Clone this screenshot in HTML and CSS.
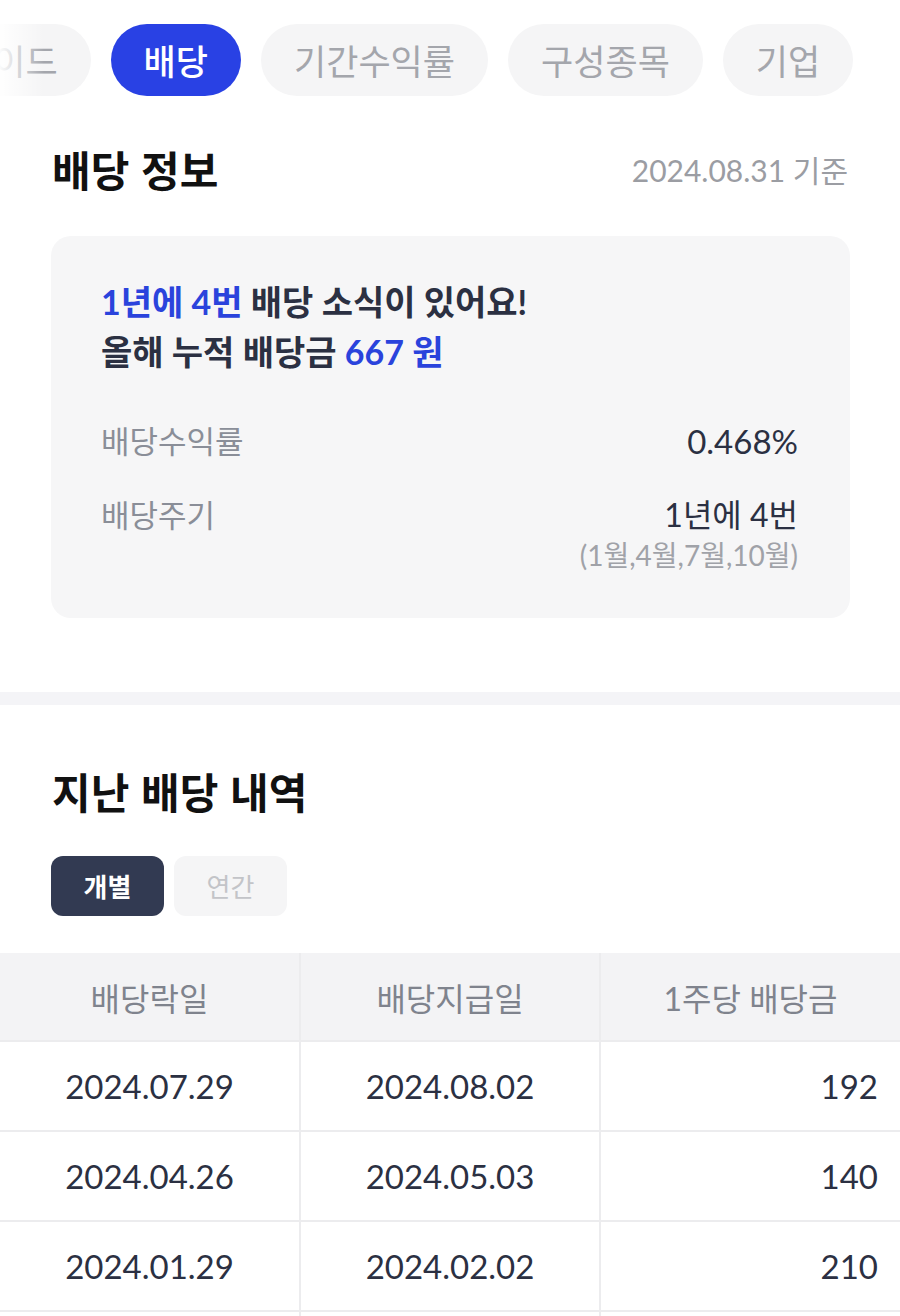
FILE: index.html
```html
<!DOCTYPE html>
<html lang="ko">
<head>
<meta charset="utf-8">
<title>배당</title>
<link rel="stylesheet" href="styles.css">
</head>
<body>
<div class="page">
  <nav class="tabs">
    <div class="tab-track">
      <span class="tab tab-first">가이드</span>
      <span class="tab active">배당</span>
      <span class="tab">기간수익률</span>
      <span class="tab">구성종목</span>
      <span class="tab">기업</span>
    </div>
    <div class="tab-fade"></div>
  </nav>

  <section class="section info">
    <div class="section-head">
      <h2 class="title">배당 정보</h2>
      <span class="asof">2024.08.31 기준</span>
    </div>
    <div class="card">
      <p class="summary"><span class="blue">1년에 4번</span> 배당 소식이 있어요!<br>올해 누적 배당금 <span class="blue">667 원</span></p>
      <div class="rows">
        <div class="row">
          <span class="label">배당수익률</span>
          <span class="value">0.468%</span>
        </div>
        <div class="row">
          <span class="label">배당주기</span>
          <div class="value-col">
            <span class="value value-kr">1년에 4번</span>
            <span class="sub">(1월,4월,7월,10월)</span>
          </div>
        </div>
      </div>
    </div>
  </section>

  <div class="divider"></div>

  <section class="section history">
    <h2 class="title">지난 배당 내역</h2>
    <div class="toggle">
      <span class="toggle-btn on">개별</span>
      <span class="toggle-btn">연간</span>
    </div>
  </section>

  <table class="table">
    <thead>
      <tr><th>배당락일</th><th>배당지급일</th><th>1주당 배당금</th></tr>
    </thead>
    <tbody>
      <tr><td>2024.07.29</td><td>2024.08.02</td><td class="num">192</td></tr>
      <tr><td>2024.04.26</td><td>2024.05.03</td><td class="num">140</td></tr>
      <tr><td>2024.01.29</td><td>2024.02.02</td><td class="num">210</td></tr>
      <tr class="last"><td></td><td></td><td class="num"></td></tr>
    </tbody>
  </table>
</div>
</body>
</html>
```

FILE: styles.css
```css
* { box-sizing: border-box; }
html, body { margin: 0; padding: 0; background: #fff; }
body {
  font-family: Lato, "Noto Sans CJK KR", sans-serif;
  color: #2b3042;
  width: 900px;
  height: 1316px;
  overflow: hidden;
}
.page { width: 900px; }

.tabs {
  position: relative;
  height: 120px;
  overflow: hidden;
}
.tab-track {
  display: flex;
  gap: 20px;
  padding-top: 24px;
  margin-left: -72px;
}
.tab {
  flex: none;
  height: 72px;
  line-height: 72px;
  padding: 0 33px;
  border-radius: 36px;
  background: #f5f5f6;
  color: #a4a6ac;
  font-size: 35px;
  font-family: "Noto Sans CJK KR", sans-serif;
  white-space: nowrap;
}
.tab.active {
  background: #2941e4;
  color: #fff;
  font-weight: 500;
}
.tab-fade {
  position: absolute;
  left: 0; top: 0; bottom: 0;
  width: 44px;
  background: linear-gradient(to right, rgba(255,255,255,0.95), rgba(255,255,255,0));
}

.section { padding: 0 52px 0 52px; }
.section-head {
  display: flex;
  justify-content: space-between;
  align-items: center;
  margin-top: 21px;
}
.title {
  margin: 0;
  font-family: "Noto Sans CJK KR", sans-serif;
  font-size: 42px;
  font-weight: 700;
  color: #111;
  line-height: 56px;
}
.asof {
  font-size: 30px;
  color: #9b9da3;
}

.card {
  margin: 39px -2px 0 -1px;
  background: #f6f6f7;
  border-radius: 20px;
  padding: 41px 52px 46px 50px;
}
.summary {
  margin: 0;
  font-size: 34px;
  font-weight: 700;
  line-height: 50px;
  color: #2b3042;
}
.blue { color: #2a43dc; }
.rows {
  display: flex;
  flex-direction: column;
  gap: 28px;
  margin-top: 41px;
}
.row {
  display: flex;
  justify-content: space-between;
  align-items: flex-start;
}
.label {
  font-size: 31px;
  color: #8a8e98;
  line-height: 46px;
}
.value {
  font-size: 33px;
  color: #2b3042;
  line-height: 46px;
}
.value-kr { font-size: 32px; }
.value-col {
  display: flex;
  flex-direction: column;
  align-items: flex-end;
}
.sub {
  font-size: 28px;
  color: #a0a2a8;
  line-height: 34px;
}

.divider {
  height: 13px;
  background: #f4f4f7;
  margin-top: 74px;
}

.history .title { margin-top: 58px; }
.toggle {
  display: flex;
  gap: 10px;
  margin: 37px 0 0 -1px;
}
.toggle-btn {
  width: 113px;
  height: 60px;
  line-height: 60px;
  text-align: center;
  border-radius: 12px;
  background: #f5f5f6;
  color: #c3c4c8;
  font-size: 26px;
  font-family: "Noto Sans CJK KR", sans-serif;
}
.toggle-btn.on {
  background: #323a52;
  color: #fff;
  font-weight: 700;
}

.table {
  margin-top: 37px;
  width: 900px;
  border-collapse: collapse;
  table-layout: fixed;
}
.table th, .table td {
  border: 2px solid #ececee;
  font-weight: 400;
  text-align: center;
  padding: 0;
}
.table tr > :first-child { border-left: none; }
.table tr > :last-child { border-right: none; }
.table th {
  height: 88px;
  background: #f3f3f5;
  color: #7f838d;
  border-top: none;
  font-size: 32px;
}
.table td {
  height: 90px;
  color: #2b3042;
  font-size: 33px;
}
.table td.num {
  text-align: right;
  padding-right: 22px;
}
```
